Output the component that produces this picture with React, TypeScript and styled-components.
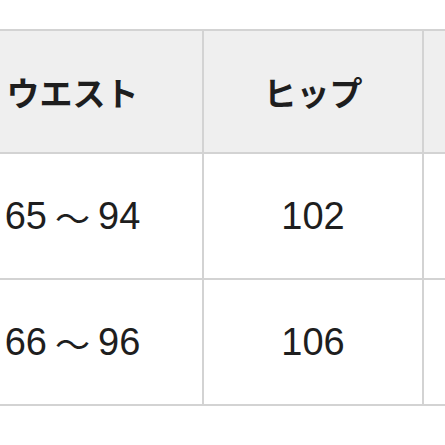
import { Fragment } from "react";
import styled, { createGlobalStyle } from "styled-components";

const GlobalStyle = createGlobalStyle`
  html, body {
    margin: 0;
    padding: 0;
    background: #ffffff;
    overflow: hidden;
  }
  body {
    font-family: "Liberation Sans", "Noto Sans CJK JP", sans-serif;
    color: #1a1a1a;
  }
`;

const Page = styled.div`
  width: 445px;
  height: 445px;
  overflow: hidden;
  padding-top: 29px;
  box-sizing: border-box;
`;

const SizeGrid = styled.div`
  display: grid;
  grid-template-columns: 261px 220px 220px;
  grid-template-rows: 123px 126px 126px;
  margin-left: -57px;
  width: max-content;
  border-top: 2px solid #d3d3d3;
`;

const Cell = styled.div<{ $head?: boolean }>`
  box-sizing: border-box;
  display: flex;
  align-items: center;
  justify-content: center;
  border-right: 2px solid #d3d3d3;
  border-bottom: 2px solid #d3d3d3;
  background: ${(p) => (p.$head ? "#efefef" : "#ffffff")};
  font-size: ${(p) => (p.$head ? "33px" : "38px")};
  font-weight: ${(p) => (p.$head ? 700 : 400)};
  font-family: ${(p) =>
    p.$head
      ? `"Noto Sans CJK JP", sans-serif`
      : `"Liberation Sans", "Noto Sans CJK JP", sans-serif`};
  color: #1e1e1e;
  white-space: nowrap;
`;

const Tilde = styled.span`
  font-family: "Noto Sans CJK JP", sans-serif;
  font-size: 35px;
  margin: 0 8px;
`;

const rows = [
  { waist: ["65", "94"], hip: "102" },
  { waist: ["66", "96"], hip: "106" },
];

export default function App() {
  return (
    <>
      <GlobalStyle />
      <Page>
        <SizeGrid>
          <Cell $head>ウエスト</Cell>
          <Cell $head>ヒップ</Cell>
          <Cell $head />
          {rows.map((r) => (
            <Fragment key={r.hip}>
              <Cell>
                {r.waist[0]}
                <Tilde>～</Tilde>
                {r.waist[1]}
              </Cell>
              <Cell>{r.hip}</Cell>
              <Cell />
            </Fragment>
          ))}
        </SizeGrid>
      </Page>
    </>
  );
}
